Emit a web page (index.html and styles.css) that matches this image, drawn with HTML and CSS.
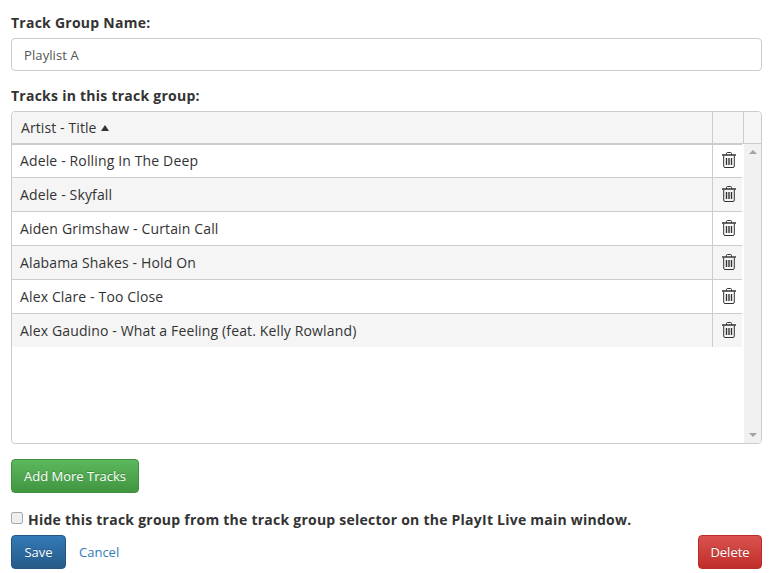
FILE: index.html
```html
<!DOCTYPE html>
<html lang="en">

<head>
    <meta charset="UTF-8">
    <meta name="viewport" content="width=device-width, initial-scale=1.0">
    <title>Track Group</title>
    <link rel="stylesheet" href="styles.css">
</head>

<body>
    <svg class="icon-defs" width="0" height="0">
        <symbol id="trash" viewBox="0 0 14 16">
            <path d="M4.5 3V1.5Q4.5 .5 5.5 .5H8.5Q9.5 .5 9.5 1.5V3" fill="none" stroke="#333" />
            <path d="M0 3H14" stroke="#333" stroke-width="1.4" />
            <path d="M1.7 3.5V14Q1.7 15.5 3 15.5H11Q12.3 15.5 12.3 14V3.5" fill="none" stroke="#333" />
            <path d="M4.5 6V13M7 6V13M9.5 6V13" stroke="#333" stroke-width="1.4" />
        </symbol>
    </svg>

    <form class="page">
        <label class="field-label" for="groupName">Track Group Name:</label>
        <input class="text-input" type="text" id="groupName" value="Playlist A">

        <div class="field-label tracks-label">Tracks in this track group:</div>
        <div class="grid">
            <div class="grid-head">
                <div class="head-title">Artist - Title <span class="sort-arrow"></span></div>
                <div class="head-action"></div>
                <div class="head-scroll"></div>
            </div>
            <div class="grid-body">
                <div class="rows">
                    <div class="row">
                        <div class="row-title">Adele - Rolling In The Deep</div>
                        <div class="row-action"><svg class="trash"><use href="#trash" /></svg></div>
                    </div>
                    <div class="row">
                        <div class="row-title">Adele - Skyfall</div>
                        <div class="row-action"><svg class="trash"><use href="#trash" /></svg></div>
                    </div>
                    <div class="row">
                        <div class="row-title">Aiden Grimshaw - Curtain Call</div>
                        <div class="row-action"><svg class="trash"><use href="#trash" /></svg></div>
                    </div>
                    <div class="row">
                        <div class="row-title">Alabama Shakes - Hold On</div>
                        <div class="row-action"><svg class="trash"><use href="#trash" /></svg></div>
                    </div>
                    <div class="row">
                        <div class="row-title">Alex Clare - Too Close</div>
                        <div class="row-action"><svg class="trash"><use href="#trash" /></svg></div>
                    </div>
                    <div class="row">
                        <div class="row-title">Alex Gaudino - What a Feeling (feat. Kelly Rowland)</div>
                        <div class="row-action"><svg class="trash"><use href="#trash" /></svg></div>
                    </div>
                </div>
                <div class="scrollbar">
                    <span class="scroll-up"></span>
                    <span class="scroll-down"></span>
                </div>
            </div>
        </div>

        <button class="btn btn-green add-btn" type="button">Add More Tracks</button>

        <label class="hide-option">
            <input class="hide-check" type="checkbox">
            <span>Hide this track group from the track group selector on the PlayIt Live main window.</span>
        </label>

        <div class="actions">
            <button class="btn btn-blue save-btn" type="button">Save</button>
            <a class="cancel-link" href="#">Cancel</a>
            <button class="btn btn-red delete-btn" type="button">Delete</button>
        </div>
    </form>
</body>

</html>
```

FILE: styles.css
```css
* {
    box-sizing: border-box;
}

body {
    margin: 0;
    background-color: #fff;
    color: #333;
    font-family: "Open Sans", Arial, sans-serif;
    font-size: 14px;
}

.icon-defs {
    display: block;
}

.page {
    padding: 14px 9px 0 11px;
}

.field-label {
    display: block;
    height: 24px;
    line-height: 17px;
    font-weight: bold;
    letter-spacing: 0.25px;
}

.text-input {
    display: block;
    width: 100%;
    height: 33px;
    padding: 0 12px;
    border: 1px solid #ccc;
    border-radius: 4px;
    color: #555;
    font-family: inherit;
    font-size: 13px;
    letter-spacing: 0.1px;
}

.tracks-label {
    margin-top: 16px;
}

.grid {
    height: 333px;
    border: 1px solid #ccc;
    border-radius: 4px;
    overflow: hidden;
}

.grid-head {
    display: flex;
    height: 32px;
    background-color: #f5f5f5;
    border-bottom: 1px solid #ccc;
}

.head-title {
    flex: 1;
    padding: 0 9px;
    line-height: 31px;
    letter-spacing: 0.1px;
}

.sort-arrow {
    display: inline-block;
    margin-left: 1px;
    border-left: 4px solid transparent;
    border-right: 4px solid transparent;
    border-bottom: 6px solid #333;
    vertical-align: 2px;
}

.head-action {
    width: 31px;
    border-left: 1px solid #ccc;
}

.head-scroll {
    width: 18px;
    border-left: 1px solid #ccc;
}

.grid-body {
    display: flex;
    height: 299px;
}

.rows {
    flex: 1;
    margin-right: 2px;
}

.row {
    display: flex;
    height: 34px;
    border-top: 1px solid #ccc;
}

.row:first-child {
    height: 33px;
}

.row:nth-child(even) {
    background-color: #f5f5f5;
}

.row-title {
    flex: 1;
    padding: 0 8px;
    line-height: 33px;
    letter-spacing: 0.14px;
}

.row:first-child .row-title {
    line-height: 32px;
}

.row-action {
    width: 30px;
    display: flex;
    justify-content: center;
    padding: 8px 0 0 3px;
    border-left: 1px solid #ccc;
}

.row:first-child .row-action {
    padding-top: 7px;
}

.trash {
    width: 14px;
    height: 16px;
}

.scrollbar {
    width: 17px;
    display: flex;
    flex-direction: column;
    justify-content: space-between;
    align-items: center;
    padding: 6px 0;
    background-color: #f1f1f1;
}

.scroll-up {
    border-left: 4px solid transparent;
    border-right: 4px solid transparent;
    border-bottom: 4px solid #a3a3a3;
}

.scroll-down {
    border-left: 4px solid transparent;
    border-right: 4px solid transparent;
    border-top: 4px solid #a3a3a3;
}

.btn {
    height: 34px;
    padding: 0 12px;
    border: 1px solid transparent;
    border-radius: 4px;
    color: #fff;
    font-family: inherit;
    font-size: 13px;
    text-shadow: 0 -1px 0 rgba(0, 0, 0, 0.2);
}

.btn-green {
    background-image: linear-gradient(to bottom, #5cb85c, #419641);
    border-color: #3e8f3e;
}

.btn-blue {
    background-image: linear-gradient(to bottom, #337ab7, #265a88);
    border-color: #245580;
}

.btn-red {
    background-image: linear-gradient(to bottom, #d9534f, #c12e2a);
    border-color: #b92c28;
}

.add-btn {
    display: block;
    margin-top: 15px;
}

.hide-option {
    display: flex;
    align-items: center;
    height: 18px;
    margin-top: 17px;
    font-weight: bold;
    letter-spacing: 0.24px;
}

.hide-check {
    appearance: none;
    width: 12px;
    height: 12px;
    margin: -2px 5px 0 0;
    background-color: #eee;
    border: 1px solid #aaa;
    border-radius: 2px;
}

.actions {
    display: flex;
    align-items: center;
    margin-top: 7px;
}

.save-btn {
    width: 55px;
    padding: 0;
}

.cancel-link {
    margin-left: 13px;
    color: #337ab7;
    font-size: 13px;
    text-decoration: none;
}

.delete-btn {
    width: 64px;
    padding: 0;
    margin-left: auto;
}
```
